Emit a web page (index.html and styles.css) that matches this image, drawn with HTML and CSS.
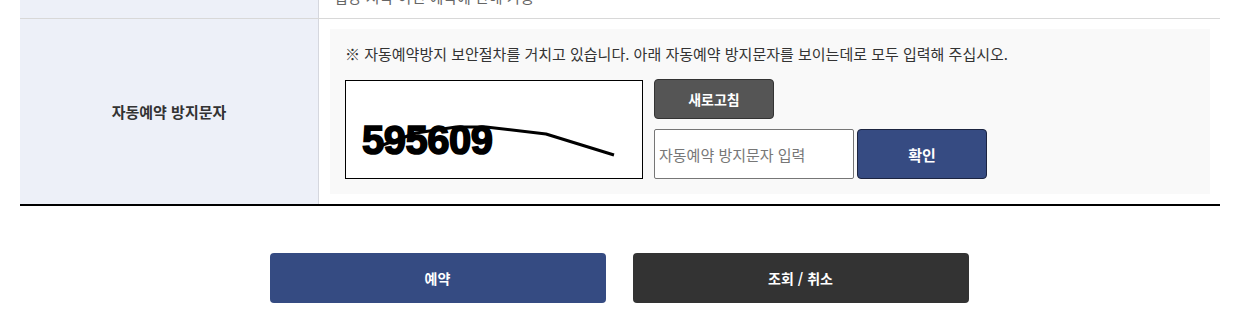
FILE: index.html
```html
<!DOCTYPE html>
<html lang="ko">
<head>
<meta charset="utf-8">
<link rel="stylesheet" href="styles.css">
</head>
<body>
<div class="wrap">
  <table class="form">
    <tr class="prev">
      <th></th>
      <td>입장 시각 이전 예약에 한해 가능</td>
    </tr>
    <tr class="last">
      <th>자동예약 방지문자</th>
      <td>
        <div class="captcha-box">
          <p class="notice">※ 자동예약방지 보안절차를 거치고 있습니다. 아래 자동예약 방지문자를 보이는데로 모두 입력해 주십시오.</p>
          <div class="captcha-row">
            <div class="captcha-img">
              <svg width="296" height="97" viewBox="0 0 296 97">
                <text x="16" y="73" class="cap-text">595609</text>
                <polyline points="34,65 70,52 110,46 140,46 200,53 268,74" fill="none" stroke="#000" stroke-width="3" stroke-linejoin="round"/>
              </svg>
            </div>
            <div class="captcha-ctrl">
              <button class="btn-refresh" type="button">새로고침</button>
              <div class="input-row">
                <input class="cap-input" type="text" placeholder="자동예약 방지문자 입력">
                <button class="btn-confirm" type="button">확인</button>
              </div>
            </div>
          </div>
        </div>
      </td>
    </tr>
  </table>
  <div class="actions">
    <button class="btn-big btn-reserve" type="button">예약</button>
    <button class="btn-big btn-check" type="button">조회 / 취소</button>
  </div>
</div>
</body>
</html>
```
FILE: styles.css
```css
html, body {
  margin: 0;
  padding: 0;
  background: #fff;
  font-family: "Noto Sans CJK KR", "Noto Sans", sans-serif;
  color: #333;
  overflow: hidden;
}
.wrap {
  width: 1200px;
  margin: 0 0 0 20px;
}
.form {
  width: 1200px;
  border-collapse: collapse;
  margin-top: -24px;
  border-bottom: 2px solid #000;
}
.form th {
  width: 298px;
  background: #edf0f8;
  border-right: 1px solid #d5d7de;
  font-size: 15px;
  font-weight: 700;
  color: #333;
  text-align: center;
  vertical-align: middle;
  padding: 0;
}
.form td {
  padding: 10px 10px 10px 11px;
  vertical-align: top;
  font-size: 15px;
  line-height: 22px;
  color: #666;
}
.prev td {
  padding: 10px 15px;
  border-bottom: 1px solid #d8d8d8;
}
.prev th {
  border-bottom: 1px solid #d8d8d8;
}
.captcha-box {
  background: #f9f9f9;
  padding: 14px 15px 15px;
}
.notice {
  margin: 0 0 14px;
  font-size: 15px;
  line-height: 22px;
  color: #333;
}
.captcha-row {
  display: flex;
  gap: 11px;
  align-items: flex-start;
}
.captcha-img {
  width: 296px;
  height: 97px;
  border: 1px solid #000;
  background: #fff;
  margin-top: 1px;
}
.captcha-img svg {
  display: block;
}
.cap-text {
  font-family: "Liberation Sans", Arial, sans-serif;
  font-weight: 700;
  font-size: 40px;
  letter-spacing: -0.5px;
  fill: #000;
  stroke: #000;
  stroke-width: 1.6px;
}
.captcha-ctrl {
  display: flex;
  flex-direction: column;
  gap: 10px;
}
.btn-refresh {
  width: 120px;
  height: 40px;
  background: #555;
  color: #fff;
  border: 1px solid #333;
  border-radius: 4px;
  font-family: inherit;
  font-size: 14px;
  font-weight: 700;
  cursor: pointer;
}
.input-row {
  display: flex;
  gap: 3px;
}
.cap-input {
  box-sizing: border-box;
  width: 200px;
  height: 50px;
  border: 1px solid #767676;
  border-radius: 2px;
  padding: 0 4px;
  font-family: inherit;
  font-size: 15px;
  background: #fff;
  outline: none;
}
.cap-input::placeholder {
  color: #777;
}
.btn-confirm {
  width: 130px;
  height: 50px;
  background: #364b82;
  color: #fff;
  border: 1px solid #1c2440;
  border-radius: 4px;
  font-family: inherit;
  font-size: 15px;
  font-weight: 700;
  cursor: pointer;
}
.actions {
  display: flex;
  justify-content: center;
  gap: 27px;
  margin-top: 47px;
  padding-right: 2px;
}
.btn-big {
  width: 336px;
  height: 50px;
  border: none;
  border-radius: 4px;
  color: #fff;
  font-family: inherit;
  font-size: 14px;
  font-weight: 700;
  cursor: pointer;
}
.btn-reserve {
  background: #354b82;
}
.btn-check {
  background: #333;
}
```
